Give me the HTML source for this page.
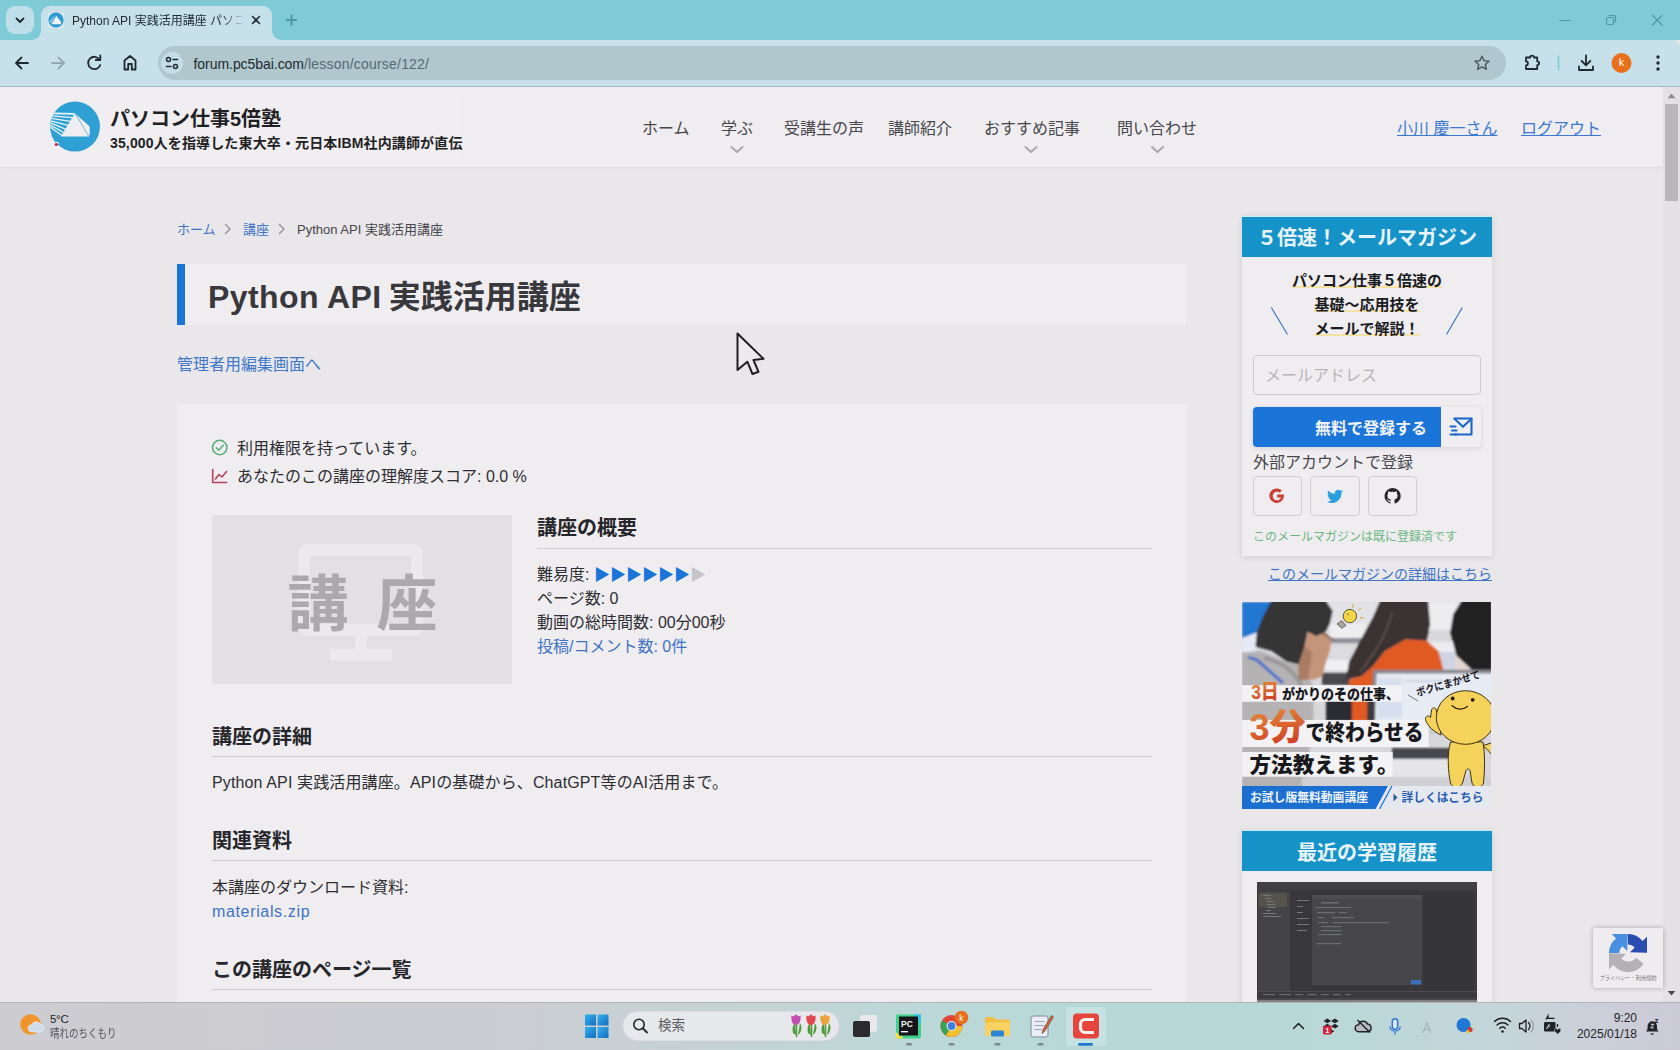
<!DOCTYPE html>
<html lang="ja">
<head>
<meta charset="utf-8">
<title>Python API 実践活用講座 パソコン仕事5倍塾</title>
<style>
*{box-sizing:border-box;margin:0;padding:0}
html,body{width:1680px;height:1050px;overflow:hidden}
body{position:relative;background:#e9e7ea;font-family:"Liberation Sans","Noto Sans CJK JP",sans-serif;color:#2e2e33;font-size:16px;line-height:24px}
.abs{position:absolute}
a{color:#3f74c4;text-decoration:none}
.t{position:absolute;white-space:nowrap}
#page .t{margin-top:2px}
/* ---------- browser chrome ---------- */
#tabstrip{left:0;top:0;width:1680px;height:40px;background:#7ecad7}
#toolbar{left:0;top:40px;width:1680px;height:47px;background:#c6e1ea;border-bottom:1px solid #a9b9c1;border-radius:0 8px 0 0}
#tabdd{left:6px;top:6px;width:28px;height:28px;border-radius:9px;background:#bfdfe8}
#tab{left:41px;top:6px;width:231px;height:34px;background:#c6e1ea;border-radius:9px 9px 0 0}
#tab:before,#tab:after{content:"";position:absolute;bottom:0;width:9px;height:9px;background:radial-gradient(circle at 0 0,rgba(0,0,0,0) 8.5px,#c6e1ea 9px)}
#tab:before{left:-9px}
#tab:after{right:-9px;transform:scaleX(-1)}
#urlbar{left:158px;top:46px;width:1348px;height:34px;border-radius:17px;background:#afc7cd}
#siteinfo{left:161px;top:52px;width:22px;height:22px;border-radius:11px;background:#c3dee6}
/* ---------- page ---------- */
#page{left:0;top:87px;width:1663px;height:915px;background:#e9e7ea;overflow:hidden}
#header{left:0;top:0;width:1663px;height:80px;background:#efedf0;box-shadow:0 1px 3px rgba(0,0,0,.05)}
#scroll{left:1663px;top:87px;width:17px;height:915px;background:#e3e1e5}
#thumb{left:1665px;top:104px;width:13px;height:97px;background:#b8b6ba}
/* ---------- taskbar ---------- */
#taskbar{left:0;top:1002px;width:1680px;height:48px;background:linear-gradient(90deg,#cdccd1 0%,#cccdd2 28%,#c7d1d5 40%,#bcd8d8 55%,#b7d8d7 66%,#b7d8d7 77%,#c3d6d9 88%,#c9d0d9 94%,#cdcbd8 100%);border-top:1px solid #b1b1b6}
#page .nav{margin-top:1px}
.nav{top:29px;font-size:16px;line-height:24px;color:#47474c}
#page .ul{margin-top:1px}
.ul{color:#3c7ad2;text-decoration:underline;text-decoration-skip-ink:none;text-underline-offset:1px;text-decoration-thickness:1px}
#page .bc{margin-top:1px}
.bc{top:132px;font-size:13px;line-height:20px;color:#3f74c4}
.h2{font-size:20px;line-height:28px;font-weight:700;color:#26262b}
.hr{height:1px;background:#cfcdd1}
.sh{text-align:center;font-size:20px;line-height:28px;font-weight:700;color:#e9f4fa}
.mk{text-align:center;font-size:15px;line-height:24px;font-weight:700;color:#1b1b22}
.mk span{background:linear-gradient(transparent 82%,#f3e2a4 82%,#f3e2a4 96%,transparent 96%)}
.sb{top:389px;width:49px;height:40px;border:1px solid #d0ced2;border-radius:4px;background:#efedf0}
</style>
</head>
<body>
<!-- ===== browser chrome ===== -->
<div id="tabstrip" class="abs"></div>
<div id="toolbar" class="abs"></div>
<div id="tabdd" class="abs"></div>
<div id="tab" class="abs"></div>
<div id="urlbar" class="abs"></div>
<div id="siteinfo" class="abs"></div>
<svg class="abs" style="left:0;top:0" width="1680" height="87" viewBox="0 0 1680 87" fill="none" stroke-linecap="round" stroke-linejoin="round">
<!-- tab dropdown chevron -->
<path d="M16.5 18.5l3.5 3.5 3.5-3.5" stroke="#1f2a30" stroke-width="1.8"/>
<!-- favicon -->
<rect x="48" y="12" width="16" height="16" fill="#e6edf3" opacity=".55" stroke="none"/>
<circle cx="56" cy="20" r="7.6" fill="#2b9ad2" stroke="none"/>
<path d="M49 21.5l6-6.500-3.500 8.500z" fill="#8cc4e6" stroke="none"/>
<path d="M51.5 24.300l4.800-8.600 4.700 6v2.600z" fill="#eef2f7" stroke="none"/>
<!-- tab close -->
<path d="M252.5 16.500l7 7m0-7l-7 7" stroke="#1f2a30" stroke-width="1.6"/>
<!-- new tab plus -->
<path d="M291.500 15.300v9.600m-4.800-4.800h9.600" stroke="#4a93a3" stroke-width="1.8"/>
<!-- back -->
<path d="M28 63h-11.500m5-5.500l-5.500 5.500 5.500 5.500" stroke="#1f2a30" stroke-width="1.8"/>
<!-- forward -->
<path d="M52 63h11.500m-5-5.500l5.500 5.500-5.500 5.500" stroke="#93aab3" stroke-width="1.8"/>
<!-- reload -->
<path d="M99.500 59.500a6.200 6.200 0 1 0 .7 5.500" stroke="#1f2a30" stroke-width="1.8"/>
<path d="M100.300 55.500v4.500h-4.500" stroke="#1f2a30" stroke-width="1.8"/>
<!-- home -->
<path d="M124.500 69.500v-9l5.500-4.500 5.500 4.500v9h-3.700v-5.500h-3.600v5.500z" stroke="#1f2a30" stroke-width="1.8"/>
<!-- site info (tune) -->
<circle cx="168.500" cy="59.500" r="2" stroke="#1f2a30" stroke-width="1.5"/>
<path d="M173 59.500h4.500" stroke="#1f2a30" stroke-width="1.5"/>
<circle cx="175.500" cy="66.500" r="2" stroke="#1f2a30" stroke-width="1.5"/>
<path d="M166.500 66.500h4.500" stroke="#1f2a30" stroke-width="1.5"/>
<!-- star -->
<path d="M1482 56.200l2.100 4.500 4.900.5-3.700 3.300 1.100 4.800-4.400-2.500-4.400 2.500 1.100-4.800-3.700-3.300 4.900-.5z" stroke="#4a5d66" stroke-width="1.5"/>
<!-- extension puzzle -->
<path d="M1526 57.500h4.200a1.900 1.900 0 0 1 3.800 0h3.200v3.800a1.900 1.900 0 0 1 0 3.800v3.900h-11.200v-3.700a1.900 1.900 0 0 0 0-3.900z" stroke="#1f2a30" stroke-width="1.8"/>
<!-- separator -->
<path d="M1558.500 56v14" stroke="#7ecad7" stroke-width="1.6"/>
<!-- download -->
<path d="M1586 55.500v9.500m-4.300-4l4.300 4.300 4.300-4.300M1579 66.500v3.500h14v-3.500" stroke="#1f2a30" stroke-width="1.8"/>
<!-- avatar -->
<circle cx="1621.500" cy="63" r="10" fill="#e8701b" stroke="none"/>
<!-- menu dots -->
<g fill="#1f2a30" stroke="none"><circle cx="1658" cy="57" r="1.700"/><circle cx="1658" cy="63" r="1.700"/><circle cx="1658" cy="69" r="1.700"/></g>
<!-- window controls -->
<path d="M1560 20.500h10" stroke="#4f97a6" stroke-width="1.200"/>
<rect x="1606.500" y="17.500" width="7" height="7" rx="1.500" stroke="#4f97a6" stroke-width="1.200"/>
<path d="M1609 15.500h5a1.500 1.500 0 0 1 1.500 1.500v5" stroke="#4f97a6" stroke-width="1.200"/>
<path d="M1652.500 15.500l9.500 9.500m0-9.500l-9.500 9.500" stroke="#4f97a6" stroke-width="1.200"/>
</svg>
<div class="t" id="tabtitle" style="left:72px;top:10.5px;width:176px;overflow:hidden;font-size:12px;line-height:20px;color:#1f2a30;-webkit-mask-image:linear-gradient(90deg,#000 150px,transparent 172px);mask-image:linear-gradient(90deg,#000 150px,transparent 172px)">Python API 実践活用講座 パソコン仕事5倍塾</div>
<div class="t" id="urltext" style="left:193.500px;top:52.500px;font-size:14px;line-height:22px;color:#566a73"><span style="color:#1f2a30;letter-spacing:-.05px">forum.pc5bai.com</span><span style="letter-spacing:.2px">/lesson/course/122/</span></div>
<div class="t" style="left:1611.500px;top:52px;width:20px;text-align:center;font-size:11px;line-height:21px;color:#fff">k</div>
<!--CHROME-->
<!-- ===== page ===== -->
<div id="page" class="abs">
<div id="header" class="abs"></div>
<!-- header (page coords: y = screen y - 87) -->
<div class="abs" style="left:49px;top:5px;width:413px;height:75px;background:#f0eef1"></div>
<svg class="abs" style="left:48px;top:13px" width="54" height="54" viewBox="0 0 54 54">
<circle cx="27" cy="26.600" r="25" fill="#2fa0d3"/>
<g stroke="#e6f3fa" fill="none" stroke-linecap="butt"><path d="M5 13.400L26.500 13.900" stroke-width="1.800"/><path d="M4.200 15.900L24.400 17.700" stroke-width="1.300"/><path d="M3.300 18.400L22.500 21.400" stroke-width="1.300"/><path d="M2.700 20.800L20.100 25.400" stroke-width="1.300"/><path d="M2.400 22.900L18 29.300" stroke-width="1.300"/><path d="M2.100 25.100L16.100 32.700" stroke-width="1.300"/><path d="M2.400 27.200L14.300 35.700" stroke-width="1.300"/></g>
<path d="M26.800 13.200L41.700 26.500V35L40.800 36.600H13z" fill="#eeedf1"/>
<path d="M27.600 14L40.600 36" stroke="#4a9cc4" stroke-width=".7" fill="none"/>
<path d="M7 43l2.500-1.500 2 2.500z" fill="#f2f0f3"/>
<circle cx="8.300" cy="44.500" r="1.600" fill="#cf1f3a"/>
</svg>
<div class="t" style="left:110px;top:16px;font-size:20px;line-height:28px;font-weight:700;color:#1f1f24">パソコン仕事5倍塾</div>
<div class="t" id="subt" style="left:110px;top:44px;letter-spacing:.14px;font-size:14px;line-height:20px;font-weight:700;color:#1f1f24">35,000人を指導した東大卒・元日本IBM社内講師が直伝</div>
<div class="t nav" style="left:642px">ホーム</div>
<div class="t nav" style="left:721px">学ぶ</div>
<div class="t nav" style="left:784px">受講生の声</div>
<div class="t nav" style="left:888px">講師紹介</div>
<div class="t nav" style="left:984px">おすすめ記事</div>
<div class="t nav" style="left:1117px">問い合わせ</div>
<svg class="abs" style="left:0;top:55px" width="1300" height="14" viewBox="0 0 1300 14" fill="none" stroke="#a9a7ac" stroke-width="2" stroke-linecap="round" stroke-linejoin="round"><path d="M731.500 5l5.500 5 5.500-5"/><path d="M1025.500 5l5.500 5 5.500-5"/><path d="M1152 5l5.500 5 5.500-5"/></svg>
<a class="t ul" style="left:1397px;top:29px">小川 慶一さん</a>
<a class="t ul" style="left:1521px;top:29px">ログアウト</a>
<!-- breadcrumb -->
<a class="t bc" style="left:177px">ホーム</a>
<a class="t bc" style="left:243px">講座</a>
<div class="t bc" style="left:297px;color:#45454a">Python API 実践活用講座</div>
<svg class="abs" style="left:220px;top:135px" width="70" height="14" viewBox="0 0 70 14" fill="none" stroke="#9a989d" stroke-width="1.500" stroke-linecap="round" stroke-linejoin="round"><path d="M5.500 2.500l4.500 4.500-4.500 4.500"/><path d="M59.500 2.500l4.500 4.500-4.500 4.500"/></svg>
<!-- title -->
<div class="abs" style="left:177px;top:177px;width:1009px;height:61px;background:#efedf0;border-left:8px solid #1b74d8"></div>
<div class="t" id="h1" style="left:208px;top:184.5px;font-size:32px;line-height:46px;font-weight:700;color:#38383d"><span style="letter-spacing:.4px">Python API </span><span style="margin-left:-2px">実践活用講座</span></div>
<a class="t" style="left:177px;top:264px;color:#3f78c8">管理者用編集画面へ</a>
<!-- main card -->
<div class="abs" style="left:177px;top:317px;width:1009px;height:640px;background:#efedf0"></div>
<!-- status lines -->
<svg class="abs" style="left:210px;top:350px" width="20" height="50" viewBox="0 0 20 50" fill="none" stroke-linecap="round" stroke-linejoin="round">
<circle cx="9.700" cy="10.500" r="7.200" stroke="#58aa76" stroke-width="1.500"/>
<path d="M6.300 10.800l2.400 2.400 4.600-4.900" stroke="#58aa76" stroke-width="1.500"/>
<path d="M2.700 32.500v13h14" stroke="#b8425c" stroke-width="1.600"/>
<path d="M5.500 42l3.500-4.500 3 2.500 4.500-5.500" stroke="#b8425c" stroke-width="1.600"/>
</svg>
<div class="t" style="left:237px;top:348px">利用権限を持っています。</div>
<div class="t" id="score" style="left:237px;top:376px">あなたのこの講座の理解度スコア: 0.0 %</div>
<!-- thumbnail -->
<div class="abs" style="left:212px;top:428px;width:300px;height:169px;background:#e2e0e3"></div>
<svg class="abs" style="left:212px;top:428px" width="300" height="169" viewBox="0 0 300 169" fill="none">
<rect x="92" y="35" width="113" height="80" rx="3" stroke="#ebe9ec" stroke-width="12"/>
<rect x="143" y="120" width="12" height="15" fill="#ebe9ec"/>
<rect x="118" y="134" width="62" height="12" fill="#ebe9ec"/>
</svg>
<div class="t" id="kouza" style="left:212px;top:428px;width:300px;height:169px;text-align:center;font-size:61px;line-height:176px;font-weight:700;color:#aba9ac;letter-spacing:28px;text-indent:29px">講座</div>
<!-- overview -->
<div class="t h2" style="left:537px;top:425px">講座の概要</div>
<div class="abs hr" style="left:537px;top:461px;width:615px"></div>
<div class="t" style="left:537px;top:474px">難易度: <span style="color:#1b74d8">▶▶▶▶▶▶</span><span style="color:#c6c4c8">▶</span></div>
<div class="t" style="left:537px;top:498px">ページ数: 0</div>
<div class="t" style="left:537px;top:522px">動画の総時間数: 00分00秒</div>
<a class="t" style="left:537px;top:546px">投稿/コメント数: 0件</a>
<!-- detail -->
<div class="t h2" style="left:212px;top:634px">講座の詳細</div>
<div class="abs hr" style="left:212px;top:669px;width:940px"></div>
<div class="t" id="detail" style="left:212px;top:682px;letter-spacing:.13px">Python API 実践活用講座。APIの基礎から、ChatGPT等のAI活用まで。</div>
<div class="t h2" style="left:212px;top:738px">関連資料</div>
<div class="abs hr" style="left:212px;top:773px;width:940px"></div>
<div class="t" style="left:212px;top:787px">本講座のダウンロード資料:</div>
<a class="t" id="zip" style="left:212px;top:811px;letter-spacing:.65px">materials.zip</a>
<div class="t h2" style="left:212px;top:867px">この講座のページ一覧</div>
<div class="abs hr" style="left:212px;top:902px;width:940px"></div>
<!--MAIN-->
<!-- ===== sidebar: mail magazine (page coords) ===== -->
<div class="abs" style="left:1242px;top:129px;width:250px;height:340px;background:#efedf0;box-shadow:0 1px 6px rgba(40,30,60,.12)"></div>
<div class="abs" style="left:1242px;top:129px;width:250px;height:1px;background:#c9ecf6"></div>
<div class="abs" style="left:1242px;top:130px;width:250px;height:40px;background:#1592c8"></div>
<div class="t sh" style="left:1242px;top:134.500px;width:250px">５倍速！メールマガジン</div>
<div class="t mk" style="left:1242px;top:180px;width:250px"><span>パソコン仕事５倍速の</span></div>
<div class="t mk" style="left:1242px;top:204px;width:250px"><span>基礎〜応用技を</span></div>
<div class="t mk" style="left:1242px;top:228px;width:250px"><span>メールで解説！</span></div>
<svg class="abs" style="left:1262px;top:216px" width="210" height="36" viewBox="0 0 210 36" fill="none" stroke="#3b78c8" stroke-width="1.200" stroke-linecap="round"><path d="M9.600 5l15.600 26"/><path d="M200 5l-15.200 26"/></svg>
<div class="abs" style="left:1253px;top:268px;width:228px;height:40px;border:1px solid #cdcbcf;border-radius:4px;background:#efedf0"></div>
<div class="t" style="left:1265px;top:275px;color:#b7b5b9">メールアドレス</div>
<div class="abs" style="left:1253px;top:320px;width:228px;height:40px;border-radius:4px;background:#f0eef1;box-shadow:0 1px 5px rgba(40,30,60,.14)"></div>
<div class="abs" style="left:1253px;top:320px;width:188px;height:40px;border-radius:4px 0 0 4px;background:#1b74d8"></div>
<div class="t" style="left:1253px;top:328px;width:174px;text-align:right;font-weight:700;color:#f4f4f8">無料で登録する</div>
<svg class="abs" style="left:1448px;top:329px" width="26" height="22" viewBox="0 0 26 22" fill="none" stroke="#1a68c8" stroke-width="2.100" stroke-linejoin="round" stroke-linecap="round"><path d="M6.500 2.500h17v16h-17"/><path d="M6.500 2.800l8.500 8 8.500-8"/><path d="M2.500 10.500h5M4 14.500h4.500M2.500 18.500h6"/></svg>
<div class="t" style="left:1253px;top:362px;color:#48484d">外部アカウントで登録</div>
<div class="abs sb" style="left:1253px"></div>
<div class="abs sb" style="left:1310px;width:50px"></div>
<div class="abs sb" style="left:1368px;width:49px"></div>
<svg class="abs" style="left:1253px;top:389px" width="164" height="40" viewBox="0 0 164 40">
<!-- google G -->
<path d="M30.800 18.500h-6.600v2.900h3.700c-.5 1.800-2 2.900-3.900 2.900a4.300 4.300 0 1 1 2.800-7.600l2.100-2.100a7.300 7.300 0 1 0 2.100 5.200c0-.5-.1-.9-.2-1.300z" fill="#cf3e36"/>
<!-- twitter bird -->
<path d="M90 15.300c-.6.300-1.200.4-1.900.5.700-.4 1.200-1 1.400-1.800-.6.400-1.300.6-2.100.8a3.300 3.300 0 0 0-5.600 3c-2.700-.1-5.100-1.400-6.700-3.400-.9 1.500-.4 3.400 1 4.400-.5 0-1-.2-1.500-.4 0 1.600 1.100 3 2.600 3.300-.5.100-1 .2-1.500.1.400 1.300 1.600 2.300 3.100 2.300a6.600 6.600 0 0 1-4.800 1.300 9.300 9.300 0 0 0 14.300-8.200c.7-.5 1.300-1.100 1.700-1.900z" fill="#2a9fe0"/>
<!-- github -->
<path d="M139.500 12a8 8 0 0 0-2.500 15.600c.4.100.5-.2.500-.4v-1.400c-2.200.5-2.700-1-2.700-1-.4-.9-.9-1.200-.9-1.200-.7-.5.100-.5.100-.5.800.1 1.200.8 1.200.8.700 1.200 1.900.9 2.300.7.100-.5.300-.9.500-1.100-1.800-.2-3.600-.9-3.600-4 0-.9.300-1.600.8-2.100-.1-.2-.4-1 .1-2.100 0 0 .7-.2 2.200.8a7.600 7.600 0 0 1 4 0c1.500-1 2.200-.8 2.200-.8.400 1.100.2 1.900.1 2.100.5.600.8 1.300.8 2.100 0 3.100-1.900 3.800-3.600 4 .3.300.6.800.6 1.500v2.200c0 .2.100.5.600.4A8 8 0 0 0 139.500 12z" fill="#26262b"/>
</svg>
<div class="t" style="left:1253px;top:437.500px;font-size:12px;line-height:20px;color:#6cb77e">このメールマガジンは既に登録済です</div>
<a class="t ul" style="left:1268px;top:475px;font-size:14px;line-height:22px;color:#3d74c6">このメールマガジンの詳細はこちら</a>
<!-- ===== sidebar: banner (249x207 at 1242,515 page coords) ===== -->
<svg class="abs" style="left:1242px;top:515px" width="249" height="207" viewBox="0 0 249 207" font-family="'Liberation Sans','Noto Sans CJK JP',sans-serif" font-weight="900">
<defs>
<filter id="bl" x="-5%" y="-5%" width="110%" height="110%"><feGaussianBlur stdDeviation="1.100"/></filter>
<filter id="bl2" x="-5%" y="-5%" width="110%" height="110%"><feGaussianBlur stdDeviation="0.500"/></filter>
<linearGradient id="og" x1="0" y1="0" x2=".3" y2="1"><stop offset="0" stop-color="#e8903a"/><stop offset="1" stop-color="#cf4226"/></linearGradient>
<clipPath id="bc"><rect width="249" height="207"/></clipPath>
</defs>
<g clip-path="url(#bc)">
<rect width="249" height="207" fill="#d8d8dc"/>
<g filter="url(#bl)">
<!-- background room -->
<rect x="80" y="0" width="170" height="26" fill="#e3e3e7"/>
<rect x="186" y="0" width="30" height="28" fill="#ededf0"/>
<rect x="88" y="22" width="36" height="14" fill="#eeeef1"/>
<rect x="84" y="36" width="40" height="5" fill="#8f8f96"/>
<rect x="80" y="44" width="40" height="22" fill="#dcdce0"/>
<rect x="78" y="58" width="30" height="10" fill="#f0f0f3"/>
<rect x="80" y="71" width="28" height="12" fill="#48484d"/>
<rect x="188" y="40" width="26" height="10" fill="#ececf0"/>
<rect x="196" y="50" width="20" height="16" fill="#cfd4e4"/>
<!-- blue corner -->
<path d="M0 0H34L16 30L0 50z" fill="#2377d3"/>
<path d="M0 36L16 30L13 49L0 51z" fill="#e4ebf6"/>
<!-- man: sweater -->
<path d="M0 50.600L19.300 49.100L44.600 59.500L58 64L71.400 83.300V120L62 190H0z" fill="#b4b2b3"/>
<path d="M22 56C40 60 54 70 60 86" stroke="#9a989a" stroke-width="4" fill="none"/>
<!-- man: face -->
<path d="M83.300 29.800L89.300 38.700L87.800 49.100L83.300 62.500L80.400 74.400L69.900 78L56.500 78V62.500L62.500 44.600L65.500 29.800L74.400 34.200z" fill="#c4957a"/>
<path d="M62.500 44.600L70 50L66 78H56.500V62.500z" fill="#a97c64"/>
<!-- man: hair -->
<path d="M29.800 -2H83.300L90.800 8.900L87.800 22.300L83.300 29.800L74.400 34.200L65.500 29.800L62.500 44.600L56.500 62.500L44.600 59.500L29.800 49.100L13.400 44.600L14.900 29.800L20.800 14.900z" fill="#353436"/>
<path d="M79 30.500l12.500 7" stroke="#4d3a33" stroke-width="1.400"/>
<!-- lanyard -->
<path d="M6 55L15 58L41 81" stroke="#3468cf" stroke-width="2.800" fill="none"/>
<!-- woman: shirt -->
<path d="M163.700 37.200L184.500 38.700L196.400 49.100L200.900 65.500V68H131V84H107V77.400L119 74.400L131 64L142.900 49.100z" fill="#e15a20"/>
<!-- woman: hair -->
<path d="M138.400 -2H186L188.200 22.300L184.500 38.700L163.700 37.200L142.900 49.100L131 64L119 74.400L104.200 77.400L107.100 59.500L119 37.200L131 14.900z" fill="#3a3233"/>
<path d="M150 10C146 30 134 50 118 70" stroke="#5a4d4c" stroke-width="2" fill="none"/>
<!-- right person -->
<path d="M212.800 52L232.100 70L244 71.400L250 77.400V92L232.100 86L214.300 67z" fill="#e4d8d2"/>
<path d="M220.200 -2H250V77.400L244 71.400L232.100 69.900L214.300 53.600L208.300 29.800L211.300 11.900z" fill="#222123"/>
<!-- laptop -->
<path d="M131 67.700H250V124H129z" fill="#85868e"/>
<path d="M134.500 71.500H250V120H133z" fill="#e7ebf4"/>
<rect x="136" y="76" width="24" height="40" fill="#d5dff0"/>
<rect x="162" y="78" width="60" height="2" fill="#c9d2e4"/>
<rect x="120" y="124" width="130" height="8" fill="#c9c9cf"/>
<rect x="150" y="146" width="66" height="11" fill="#474750"/>
<rect x="150" y="157" width="70" height="27" fill="#e6e6ea"/>
<rect x="84" y="98" width="28" height="22" fill="#2c2c31"/><rect x="110" y="84" width="16" height="36" fill="#e15a20"/><rect x="125" y="98" width="8" height="22" fill="#3a3a40"/>
<rect x="60" y="175" width="190" height="10" fill="#cfcfd4"/>
</g>
<!-- light bulb -->
<g filter="url(#bl2)"><circle cx="107.900" cy="14.100" r="6.700" fill="#f3d545" stroke="#3a3320" stroke-width=".8"/><path d="M99.500 18.500l4.500 5-4.200 2.800-4.800-4.300z" fill="#a8a59c" stroke="#3a3320" stroke-width=".6"/><path d="M110.500 5.500l.8-3.200M116 8.500l3-2.300M118 15.500l3.500.8" stroke="#c9a520" stroke-width="1"/><path d="M105 11.500l2 1.800" stroke="#3a3320" stroke-width=".7"/></g>
<!-- text boxes -->
<rect x="0" y="83.200" width="160" height="16.600" fill="#f4f3f5" opacity=".97"/>
<rect x="0" y="117.900" width="186.700" height="27.100" fill="#f4f3f5" opacity=".97"/>
<rect x="0" y="150" width="150.700" height="24.700" fill="#f4f3f5" opacity=".97"/>
<text x="9.300" y="96.900" font-size="20" fill="url(#og)" textLength="27.300" lengthAdjust="spacingAndGlyphs">3日</text>
<text x="40" y="96.700" font-size="14.200" fill="#19191d" textLength="117" lengthAdjust="spacingAndGlyphs">がかりのその仕事、</text>
<text x="7.500" y="137.700" font-size="36.500" fill="url(#og)" textLength="56" lengthAdjust="spacingAndGlyphs">3分</text>
<text x="63.500" y="138.300" font-size="21.300" fill="#19191d" textLength="118" lengthAdjust="spacingAndGlyphs">で終わらせる</text>
<text x="7.500" y="170.300" font-size="21" fill="#19191d" textLength="149" lengthAdjust="spacingAndGlyphs">方法教えます。</text>
<!-- mascot -->
<g filter="url(#bl2)" stroke="#3d3216" stroke-width="1">
<path d="M240 144C245 146 250 152 252 158V140z" fill="#f5d25a"/>
<path d="M208.500 140C205 152 206 170 208.500 181C210 186.500 219 186.500 220.500 181L224 168.500C225 166.500 227.500 166.500 228 168.500L230 181C231.500 186.500 240.500 186 241.500 181C243 166 243 152 241 140z" fill="#f5d25a"/>
<path d="M199 133C192 130 184.500 123 183.500 117.500C183.500 113.500 187 113 188.500 115.500L189.500 108C190.500 104.500 194.500 105.500 194.500 109L197 119z" fill="#f5d25a"/>
<ellipse cx="223.600" cy="115.500" rx="29.300" ry="26.800" fill="#f5d25a"/>
</g>
<circle cx="210.700" cy="96.500" r="1.900" fill="#231d10"/><circle cx="230.700" cy="97.800" r="1.900" fill="#231d10"/>
<path d="M210 103.700Q217.500 110 225.500 104.400" stroke="#231d10" stroke-width="1.200" fill="none" stroke-linecap="round"/>
<text transform="translate(175.500,94.500) rotate(-16.500)" font-size="10.500" font-weight="700" fill="#19191d" textLength="66" lengthAdjust="spacingAndGlyphs">ボクにまかせて</text>
<path d="M166 93l10 6" stroke="#444" stroke-width=".7"/>
<!-- ribbon -->
<rect x="0" y="184" width="249" height="23" fill="#e6e8f0"/>
<path d="M0 184H146L133.500 207H0z" fill="#1a6fd0"/>
<path d="M150 184l-12.500 23" stroke="#1a6fd0" stroke-width="1.200"/>
<text x="8" y="200.300" font-size="12" font-weight="700" fill="#f1f5fb" textLength="118" lengthAdjust="spacingAndGlyphs">お試し版無料動画講座</text>
<path d="M151.500 191.500v8l4-4z" fill="#2758a8"/>
<text x="159.500" y="200.300" font-size="12" font-weight="700" fill="#2a5db0" textLength="82" lengthAdjust="spacingAndGlyphs">詳しくはこちら</text>
</g>
</svg>
<!-- ===== sidebar: history ===== -->
<div class="abs" style="left:1242px;top:743px;width:250px;height:220px;background:#efedf0;box-shadow:0 1px 6px rgba(40,30,60,.12)"></div>
<div class="abs" style="left:1242px;top:743px;width:250px;height:1px;background:#c9ecf6"></div>
<div class="abs" style="left:1242px;top:744px;width:250px;height:40px;background:#1592c8"></div>
<div class="t sh" style="left:1242px;top:749.500px;width:250px">最近の学習履歴</div>
<svg class="abs" style="left:1257px;top:795px" width="220" height="124" viewBox="0 0 220 124">
<rect width="220" height="124" fill="#3a3a3c"/>
<rect x="0" y="0" width="220" height="8" fill="#404043"/>
<rect x="1" y="9" width="32" height="100" fill="#444446"/>
<rect x="2" y="11" width="28" height="14" fill="#55544a"/>
<rect x="33" y="9" width="134" height="100" fill="#38383a"/>
<rect x="167" y="9" width="50" height="100" fill="#363638"/>
<rect x="55" y="13" width="110" height="90" fill="#47474a"/>
<rect x="55" y="13" width="110" height="4" fill="#4e4e52"/>
<g fill="#6c6d72"><rect x="64" y="20" width="18" height="1.500"/><rect x="58" y="25" width="36" height="1"/><rect x="60" y="30" width="18" height="1.200"/><rect x="82" y="30" width="8" height="1.200"/><rect x="61" y="35" width="6" height="1.200"/><rect x="75" y="35" width="22" height="1.200"/><rect x="61" y="40" width="10" height="1.200"/><rect x="76" y="40" width="56" height="1.200"/><rect x="64" y="44" width="20" height="1.200"/><rect x="64" y="48" width="20" height="1.200"/><rect x="61" y="52" width="24" height="1.200"/><rect x="60" y="61" width="24" height="1.200"/></g>
<g fill="#77787c"><rect x="6" y="13" width="8" height="1"/><rect x="8" y="16" width="6" height="1"/><rect x="10" y="19" width="7" height="1"/><rect x="10" y="22" width="8" height="1"/><rect x="11" y="25" width="8" height="1"/><rect x="9" y="28" width="5" height="1"/><rect x="6" y="31" width="13" height="1"/><rect x="6" y="34" width="18" height="1"/><rect x="40" y="18" width="12" height="1"/><rect x="40" y="24" width="6" height="1"/><rect x="40" y="30" width="6" height="1"/><rect x="40" y="36" width="12" height="1"/><rect x="40" y="42" width="12" height="1"/><rect x="40" y="48" width="10" height="1"/></g>
<rect x="154" y="98" width="10" height="4.500" fill="#3b6fb5"/>
<rect x="0" y="109" width="220" height="1" fill="#4c4c50"/>
<g fill="#6b6c70"><rect x="6" y="112" width="12" height="1.200"/><rect x="22" y="112" width="12" height="1.200"/><rect x="38" y="112" width="8" height="1.200"/><rect x="50" y="112" width="10" height="1.200"/><rect x="64" y="112" width="8" height="1.200"/><rect x="76" y="112" width="8" height="1.200"/><rect x="88" y="112" width="6" height="1.200"/></g>
<rect x="0" y="116" width="220" height="8" fill="#47474a"/><rect x="0" y="118" width="220" height="3" fill="#808083"/>
</svg>
<!--SIDE-->
<!--PAGE-->
</div>
<div id="scroll" class="abs"></div>
<div id="thumb" class="abs"></div>
<!-- scrollbar arrows -->
<svg class="abs" style="left:1663px;top:87px" width="17" height="915" viewBox="0 0 17 915"><path d="M4.700 11.200h7.600l-3.800-4.600z" fill="#8b898d"/><path d="M4.700 904h7.600l-3.800 4.500z" fill="#4d4b4f"/></svg>
<!-- recaptcha badge -->
<div class="abs" style="left:1593px;top:928px;width:70px;height:60px;background:#eeecef;border-radius:3px 0 0 3px;box-shadow:0 0 5px rgba(0,0,0,.28)"></div>
<svg class="abs" style="left:1609px;top:934px" width="38" height="38" viewBox="0 0 64 64">
<path d="M64 31.600V4.500l-7.400 7.400A31.800 31.800 0 0 0 32 0v17.500c4.500 0 8.600 2 11.300 5.200l-8 8z" fill="#2a4bb0"/>
<path d="M31.600 0H4.500l7.400 7.400A31.800 31.800 0 0 0 0 32h17.500c0-4.500 2-8.600 5.200-11.300l8 8z" fill="#4a90e2"/>
<path d="M0 32.400v27.100l7.400-7.400A31.800 31.800 0 0 0 32 64c11 0 20.600-5.500 26.300-14l-12.800-9.800A14.600 14.600 0 0 1 32 46.500c-4.500 0-8.600-2-11.300-5.200l8-8z" fill="#b3b1b5"/>
</svg>
<div class="t" style="left:1599px;top:973px;width:58px;text-align:center;font-size:5.200px;line-height:10px;color:#777579">プライバシー・利用規約</div>
<!-- mouse cursor -->
<svg class="abs" style="left:733px;top:328px" width="36" height="52" viewBox="-4 -4 36 52"><path d="M.5 1.500V38l9.800-8.300L15.500 42l6-2.200-5-11.800 10-1.200z" fill="#eceaee" stroke="#1e1e22" stroke-width="2" stroke-linejoin="round"/></svg>
<!-- ===== taskbar ===== -->
<div id="taskbar" class="abs"></div>
<svg class="abs" style="left:0;top:1002px" width="1680" height="48" viewBox="0 0 1680 48" fill="none" font-family="'Liberation Sans','Noto Sans CJK JP',sans-serif">
<defs><linearGradient id="wl" x1="0" y1="0" x2="1" y2="1"><stop offset="0" stop-color="#35b3ee"/><stop offset="1" stop-color="#136cc0"/></linearGradient></defs>
<!-- weather -->
<circle cx="30.500" cy="22.500" r="10.300" fill="#f0952b"/>
<path d="M32 30a3.600 3.600 0 0 1-.4-7.200 5 5 0 0 1 8.800-.8 3.600 3.600 0 0 1 2.400 6.200q-.8 1.800-2.800 1.800z" fill="#cfdcee" stroke="#eef2f8" stroke-width=".7"/>
<!-- windows logo -->
<g fill="url(#wl)"><rect x="585" y="12.500" width="11" height="11"/><rect x="597.500" y="12.500" width="11" height="11"/><rect x="585" y="25" width="11" height="11"/><rect x="597.500" y="25" width="11" height="11"/></g>
<!-- search pill -->
<rect x="622.500" y="9" width="217" height="30" rx="15" fill="#e6e8ec" stroke="#cfd2d8" stroke-width="1"/>
<circle cx="639" cy="22.500" r="5.200" stroke="#26262b" stroke-width="1.600"/><path d="M643 26.500l4 4" stroke="#26262b" stroke-width="1.800" stroke-linecap="round"/>
<!-- tulips -->
<g>
<path d="M793 31c-1-5 0-8 2-10l1 12zM800 31c2-4 2-7 0-10l-2 12z" fill="#4f9a3a"/><path d="M796.500 22v13" stroke="#4f9a3a" stroke-width="1.500"/>
<path d="M791.500 13.500c1.500 1 2.500 1 3 0 .8-1.500 2-1.500 3 0 .7 1 1.700 1 3 0 .7 5-1.200 9.500-4.500 9.500s-5.300-4.500-4.500-9.500z" fill="#c34fb3"/>
<path d="M808 31c-1-5 0-8 2-10l1 12zM815 31c2-4 2-7 0-10l-2 12z" fill="#4f9a3a"/><path d="M811.500 22v13" stroke="#4f9a3a" stroke-width="1.500"/>
<path d="M806.500 13.500c1.500 1 2.500 1 3 0 .8-1.500 2-1.500 3 0 .7 1 1.700 1 3 0 .7 5-1.200 9.500-4.500 9.500s-5.300-4.500-4.500-9.500z" fill="#e0474f"/>
<path d="M822 31c-1-5 0-8 2-10l1 12zM829 31c2-4 2-7 0-10l-2 12z" fill="#4f9a3a"/><path d="M825.500 22v13" stroke="#4f9a3a" stroke-width="1.500"/>
<path d="M820.500 13.500c1.500 1 2.500 1 3 0 .8-1.500 2-1.500 3 0 .7 1 1.700 1 3 0 .7 5-1.200 9.500-4.500 9.500s-5.300-4.500-4.500-9.500z" fill="#e9a33b"/>
</g>
<!-- task view -->
<rect x="860" y="13" width="17" height="17" rx="2" fill="#e9e9ec"/><rect x="853" y="19" width="17" height="16" rx="2" fill="#2b2b2e"/>
<!-- pycharm -->
<rect x="896" y="12.500" width="25" height="24" rx="2" fill="#3fd08a"/><path d="M896 30l8 6.500h-8z" fill="#f3e043"/><path d="M921 12.500v10l-8-10z" fill="#2bc5e6"/>
<rect x="899" y="14.500" width="19" height="19" fill="#16161a"/>
<text x="901" y="25" font-size="8.500" font-weight="700" fill="#f4f4f4">PC</text><rect x="901" y="29" width="7" height="1.400" fill="#f4f4f4"/>
<rect x="906" y="41" width="6" height="2.500" rx="1.200" fill="#7c8a90"/>
<!-- chrome -->
<circle cx="951.500" cy="24" r="11" fill="#e0463a"/>
<path d="M951.500 24L942 18.500A11 11 0 0 0 946 33.500z" fill="#3aa356"/><path d="M951.500 24l-5.500 9.500A11 11 0 0 0 962.500 24z" fill="#f1c02e"/>
<circle cx="951.500" cy="24" r="5" fill="#eef1f5"/><circle cx="951.500" cy="24" r="3.900" fill="#3f7fe0"/>
<circle cx="961.500" cy="15.500" r="6.800" fill="#e8701b"/>
<text x="959.300" y="18.500" font-size="8.500" fill="#fff">k</text>
<rect x="948.500" y="41" width="6" height="2.500" rx="1.200" fill="#7c8a90"/>
<!-- folder -->
<path d="M985 17a2 2 0 0 1 2-2h6l2.500 2.500H1008a2 2 0 0 1 2 2V32a2 2 0 0 1-2 2H987a2 2 0 0 1-2-2z" fill="#f3bf3c"/><rect x="985" y="20" width="25" height="14" rx="2" fill="#f8d261"/><rect x="991" y="28.500" width="13" height="6" rx="1.500" fill="#2b84d6"/>
<rect x="994.500" y="41" width="6" height="2.500" rx="1.200" fill="#7c8a90"/>
<!-- notepad -->
<rect x="1031" y="14" width="17" height="21" rx="2" fill="#e9edf5" stroke="#7f8aa0" stroke-width="1"/><path d="M1034.500 19.500h10M1034.500 23.500h10M1034.500 27.500h7" stroke="#9aa5bd" stroke-width="1"/><path d="M1051.500 13.500l-8.500 14-1 4 3-2.600 8.500-14z" fill="#d86a3a" stroke="#5a3a2a" stroke-width=".6"/>
<rect x="1037.500" y="41" width="6" height="2.500" rx="1.200" fill="#7c8a90"/>
<!-- camtasia (active) -->
<rect x="1066" y="5" width="40" height="39" rx="4" fill="#c6e2e2" opacity=".9"/>
<rect x="1073" y="11.500" width="26" height="25" rx="4" fill="#e5453d"/><path d="M1094 17.500h-9a4.500 4.500 0 0 0-4.500 4.500v4a4.500 4.500 0 0 0 4.500 4.500h9" stroke="#f7f2f2" stroke-width="3.200"/>
<rect x="1078" y="41" width="15" height="2.800" rx="1.400" fill="#1f77d4"/>
<!-- tray -->
<path d="M1293.500 26.500l5-5 5 5" stroke="#1e1e22" stroke-width="1.500" stroke-linecap="round" stroke-linejoin="round"/>
<g fill="#23232a"><path d="M1327.300 16.500l3.800 2.400-3.800 2.400-3.800-2.400zM1334.900 16.500l3.800 2.400-3.800 2.400-3.800-2.400zM1327.300 21.800l3.800 2.400-3.800 2.400-3.800-2.400zM1334.900 21.800l3.800 2.400-3.800 2.400-3.800-2.400zM1331.100 27.200l3.300 2-3.300 2-3.300-2z"/></g>
<rect x="1323" y="23.800" width="8.600" height="8.800" rx="1.300" fill="#d3203f"/><text x="1325.300" y="31.200" font-size="7.500" font-weight="700" fill="#fff">1</text>
<path d="M1358.800 29.700a3.500 3.500 0 0 1-.3-7 4.800 4.800 0 0 1 9-.7 3.900 3.900 0 0 1 .4 7.700z" fill="#b9bcc0" stroke="#23232a" stroke-width="1.500"/><path d="M1357.500 18l12.500 12.500" stroke="#23232a" stroke-width="1.500"/>
<rect x="1392.300" y="16.800" width="5.400" height="10.400" rx="2.700" fill="#dbe7f5" stroke="#2f76d2" stroke-width="1.500"/><path d="M1389.800 24.500a5.300 5.300 0 0 0 10.500 0M1395 30v2.500" stroke="#2f76d2" stroke-width="1.300"/>
<path d="M1423 31l3.800-10.500 3.800 10.500M1424.400 27.500h4.800" stroke="#a3b2b6" stroke-width="1.100"/>
<circle cx="1463.500" cy="23" r="7" fill="#1f78d6"/><circle cx="1470" cy="27.500" r="2.600" fill="#d93a3a"/><circle cx="1467.800" cy="29.800" r="1.700" fill="#f0c030"/>
<g stroke="#1e1e22" stroke-width="1.400" stroke-linecap="round"><path d="M1494.500 19.500a11.500 11.500 0 0 1 16 0"/><path d="M1497 23a8 8 0 0 1 11 0"/><path d="M1499.700 26.300a4.300 4.300 0 0 1 5.600 0"/></g><circle cx="1502.500" cy="29.500" r="1.300" fill="#1e1e22"/>
<path d="M1519.500 21.500h2.500l4-3.500v12l-4-3.500h-2.500z" stroke="#1e1e22" stroke-width="1.300" stroke-linejoin="round"/><path d="M1528.500 20.500a5 5 0 0 1 0 7" stroke="#1e1e22" stroke-width="1.200" stroke-linecap="round"/><path d="M1531 18a8.500 8.500 0 0 1 0 12" stroke="#7d8a8c" stroke-width="1" stroke-linecap="round"/>
<rect x="1544" y="20" width="11.500" height="9.500" rx="1.300" fill="#23232a"/><path d="M1546 17.500l2-3.500v2.300h6.500M1557.500 22v3" stroke="#1e1e22" stroke-width="1.300" fill="none"/><path d="M1546.500 27l2.500-4.500v3" stroke="#cfe0e2" stroke-width="1"/><path d="M1554.500 28c0-2.200 3.200-2.200 3.200 0 0-2.200 3.200-2.200 3.200 0 0 2.200-3.200 4-3.200 4s-3.200-1.800-3.200-4z" fill="#1e1e22" stroke="#c3d6d9" stroke-width=".6"/>
<path d="M1646 29.500c1.600-1.500 1.600-3 1.600-5.500a4.700 4.700 0 0 1 9.400 0c0 2.500 0 4 1.600 5.500z" fill="#23232a"/><path d="M1650.300 31.500a2 2 0 0 0 3.800 0z" fill="#23232a"/>
<path d="M1650.800 22.300h3l-3 3.600h3" stroke="#e9eef2" stroke-width=".9" fill="none"/>
<text x="1654.500" y="20.500" font-size="8" font-weight="700" fill="#23232a">z</text>
</svg>
<div class="t" style="left:50px;top:1010.500px;font-size:11.500px;line-height:16px;color:#26262b;letter-spacing:-.3px">5°C</div>
<div class="t" style="left:50px;top:1026px;font-size:12px;line-height:16px;color:#55555b;transform:scaleX(.79);transform-origin:0 50%">晴れのちくもり</div>
<div class="t" style="left:658px;top:1016px;font-size:13.500px;line-height:20px;color:#5b5b60">検索</div>
<div class="t" style="left:1560px;top:1010px;width:77px;text-align:right;font-size:12px;line-height:16px;color:#26262b">9:20</div>
<div class="t" style="left:1560px;top:1026px;width:77px;text-align:right;font-size:12px;line-height:16px;color:#26262b">2025/01/18</div>
</body>
</html>
